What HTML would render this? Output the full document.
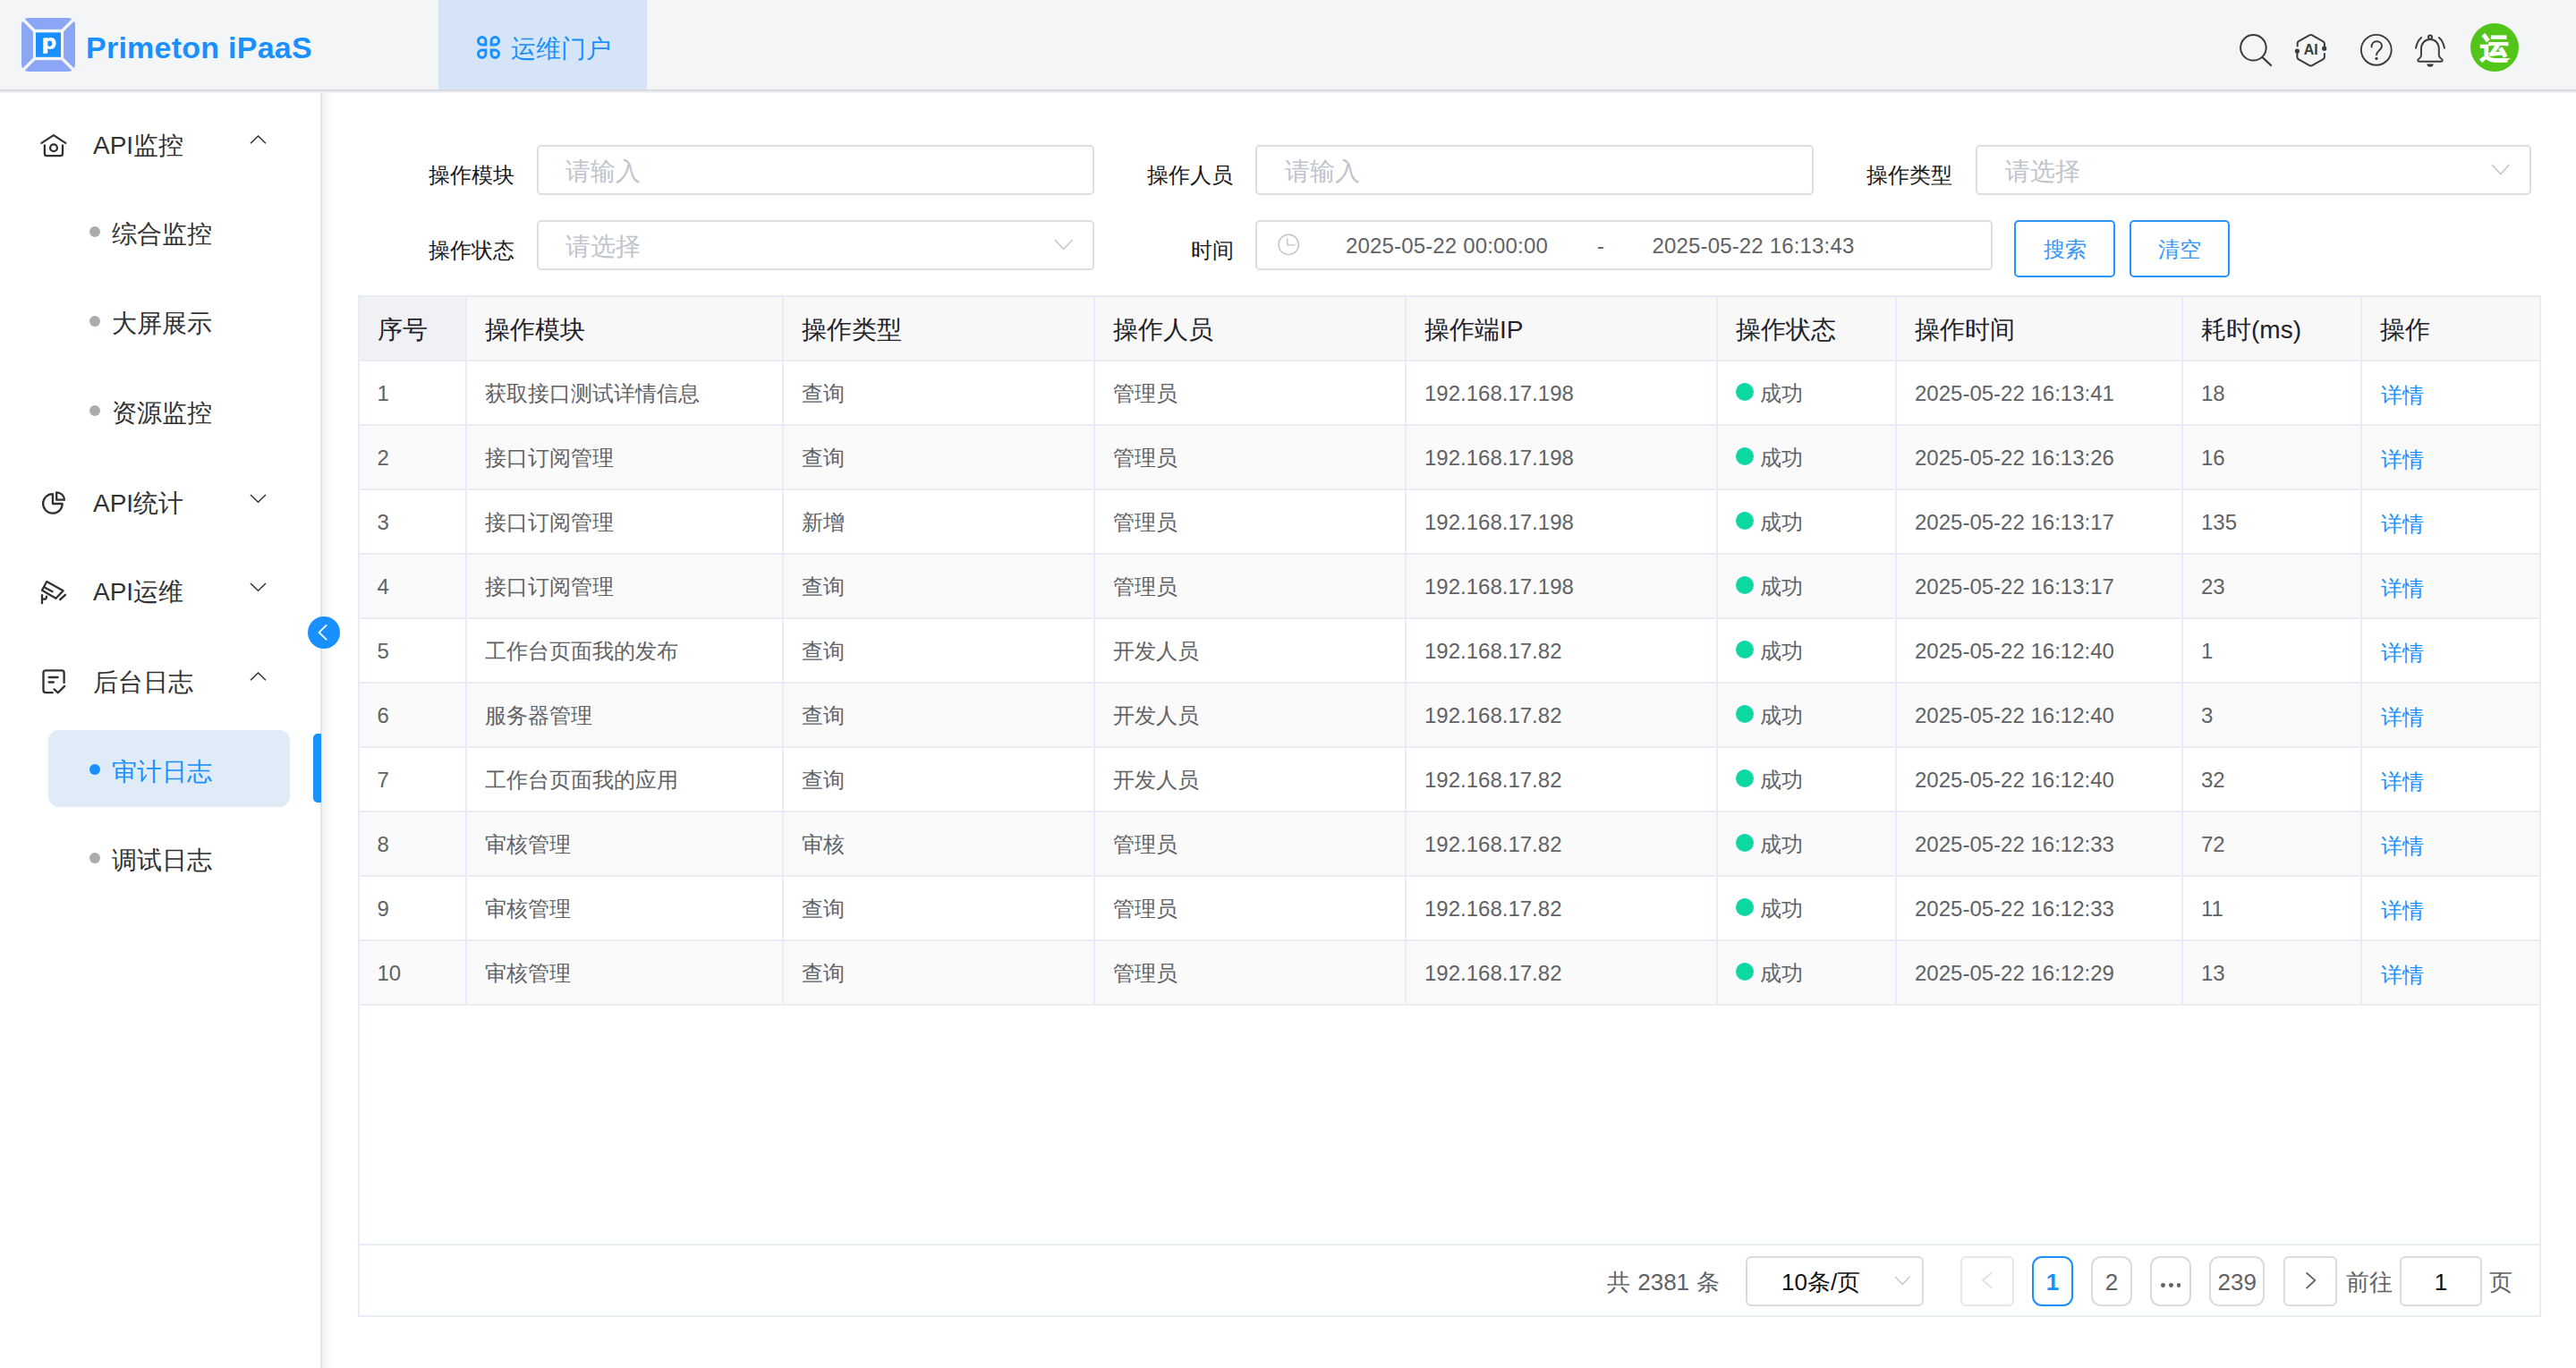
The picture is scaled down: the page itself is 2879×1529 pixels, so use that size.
<!DOCTYPE html>
<html><head><meta charset="utf-8">
<style>
*{margin:0;padding:0;box-sizing:border-box}
html,body{width:2879px;height:1529px;overflow:hidden;background:#fff;font-family:"Liberation Sans",sans-serif;color:#303133}
.abs{position:absolute}
.t{position:absolute;white-space:nowrap}
svg{overflow:visible}
</style></head><body>

<div class="abs" style="left:0px;top:0px;width:2879.0px;height:100.0px;background:#f4f5f7;"></div>
<div class="abs" style="left:0px;top:100px;width:2879.0px;height:2.0px;background:#dadada;"></div>
<div class="abs" style="left:0px;top:102px;width:2879.0px;height:2.0px;background:linear-gradient(#e7ebf3,#f3f5f9);"></div>
<div class="abs" style="left:358px;top:104px;width:2.0px;height:1425.0px;background:#e4e4e4;"></div>
<div class="abs" style="left:360px;top:104px;width:12.0px;height:1425.0px;background:linear-gradient(90deg,#f2f2f2,rgba(255,255,255,0));"></div>
<svg class="abs" style="left:24px;top:20px" width="60" height="60" viewBox="0 0 60 60">
<rect x="0" y="0" width="60" height="60" rx="8" fill="#8aa6f5"/>
<line x1="0" y1="0" x2="60" y2="60" stroke="#f4f5f7" stroke-width="3.3"/>
<line x1="60" y1="0" x2="0" y2="60" stroke="#f4f5f7" stroke-width="3.3"/>
<rect x="12.9" y="12.8" width="34.2" height="34.4" fill="#f4f5f7"/>
<rect x="16" y="16.3" width="28" height="27.5" fill="#1890ff"/>
<path fill-rule="evenodd" d="M24.3,22.5 L29.3,21.9 L29.3,23.2 C30.2,22.2 31.4,21.9 32.6,21.9 C36.3,21.9 38.6,24.6 38.6,28.3 C38.6,32.3 36.1,35 32.4,35 C31.2,35 30.1,34.7 29.3,34 L29.3,39.5 L24.3,40 Z M29.3,26.3 L29.3,31.2 C29.9,31.7 30.7,31.9 31.5,31.9 C33.3,31.9 34.4,30.6 34.4,28.6 C34.4,26.6 33.4,25.4 31.7,25.4 C30.8,25.4 30,25.7 29.3,26.3 Z" fill="#fff"/>
</svg>
<div class="t" style="left:96px;top:30.0px;height:47px;line-height:47px;font-size:34px;color:#1890ff;font-weight:bold;letter-spacing:0.25px;">Primeton iPaaS</div>
<div class="abs" style="left:490px;top:0px;width:233.0px;height:100.0px;background:#d5e5f7;"></div>
<svg class="abs" style="left:533px;top:40px" width="26" height="26" viewBox="0 0 26 26"><g fill="none" stroke="#1890ff" stroke-width="3">
<path d="M9.9,9.9 H5.7 A4.2,4.2 0 1 1 9.9,5.7 Z"/>
<path d="M16.1,9.9 H20.3 A4.2,4.2 0 1 0 16.1,5.7 Z"/>
<path d="M9.9,16.1 H5.7 A4.2,4.2 0 1 0 9.9,20.3 Z"/>
<path d="M16.1,16.1 H20.3 A4.2,4.2 0 1 1 16.1,20.3 Z"/>
</g></svg>
<div class="t" style="left:571px;top:34.5px;height:39px;line-height:39px;font-size:28px;color:#1890ff;font-weight:normal;">运维门户</div>
<svg class="abs" style="left:2495px;top:30px" width="60" height="50" viewBox="0 0 60 50"><g fill="none" stroke="#3b3b3b" stroke-width="2">
<circle cx="23.4" cy="23.3" r="14.3"/>
<line x1="34" y1="34.5" x2="43" y2="43" stroke-width="2.4" stroke-linecap="round"/></g></svg>
<svg class="abs" style="left:2560px;top:30px" width="50" height="50" viewBox="0 0 50 50"><g fill="none" stroke="#3b3b3b" stroke-width="2" stroke-linejoin="round" stroke-linecap="round">
<path d="M7.7,21.4 V18.5 Q7.7,17 9,16.2 L21.5,9.2 Q22.6,8.6 23.7,9.2 L36.4,16.3 Q37.9,17.2 37.9,18.8 V24.2"/>
<path d="M7.4,27 V33.8 Q7.4,35.5 9,36.4 L21.5,43.3 Q22.6,43.9 23.7,43.3 L36.2,36.3 Q37.9,35.4 37.9,33.6 V30"/>
</g>
<circle cx="7.4" cy="27" r="2.6" fill="#3b3b3b"/><circle cx="37.7" cy="24.2" r="2.6" fill="#3b3b3b"/>
<text x="22.7" y="30.7" font-family="Liberation Sans" font-weight="bold" font-size="16" fill="#3b3b3b" text-anchor="middle">AI</text></svg>
<svg class="abs" style="left:2630px;top:30px" width="50" height="50" viewBox="0 0 50 50"><g fill="none" stroke="#3b3b3b" stroke-width="1.9" stroke-linecap="round">
<circle cx="25.8" cy="25.8" r="16.9"/>
<path d="M20.5,22.5 C20.5,18.5 23,16.3 26.2,16.3 C29.6,16.3 32,18.6 32,21.4 C32,23.6 30.6,24.9 28.8,26.6 C26.9,28.4 26,29.5 26,31.2"/>
</g><circle cx="26" cy="35.4" r="1.6" fill="#3b3b3b"/></svg>
<svg class="abs" style="left:2695px;top:30px" width="50" height="55" viewBox="0 0 50 55"><g fill="none" stroke="#3b3b3b" stroke-width="1.9" stroke-linecap="round" stroke-linejoin="round">
<circle cx="21" cy="11.6" r="2.1"/>
<path d="M21,14 C15.2,14 11,18.5 11,24.5 V31.5 Q11,33.8 9,35.3 Q7,36.8 7.2,37.5 Q7.5,38.7 9,38.7 H33 Q34.6,38.7 34.8,37.5 Q35,36.5 33,35.2 Q30.8,33.6 30.8,31.5 V24.5 C30.8,18.5 26.8,14 21,14 Z"/>
<path d="M11.2,12.1 Q6.5,16 5,23.8"/>
<path d="M30.8,12.1 Q35.5,16 37,23.8"/>
</g><path d="M17.4,41.4 H24.6 A3.6,3.3 0 0 1 17.4,41.4 Z" fill="#3b3b3b"/></svg>
<div class="abs" style="left:2761px;top:26px;width:54px;height:54px;border-radius:50%;background:#52c41a"></div>
<div class="t" style="left:2761px;top:31.5px;height:44px;line-height:44px;font-size:32px;color:#fff;font-weight:bold;-webkit-text-stroke:1.3px #fff;"><span style="display:block;width:54px;text-align:center">运</span></div>
<svg class="abs" style="left:40px;top:140px" width="40" height="40" viewBox="0 0 40 40"><g transform="translate(0,0.9)" fill="none" stroke="#303133" stroke-width="2.3" stroke-linecap="round" stroke-linejoin="round"><path d="M6.4,19 L19.9,10.2 L33.3,19" /><path d="M9.9,21.5 V30.5 Q9.9,33.2 12.6,33.2 H27.3 Q30,33.2 30,30.5 V21.5"/><circle cx="20" cy="24.4" r="3.9"/></g></svg>
<div class="t" style="left:104px;top:142.5px;height:39px;line-height:39px;font-size:28px;color:#303133;font-weight:normal;">API监控</div>
<svg class="abs" style="left:279.5px;top:152.4px" width="17" height="8.2" viewBox="0 0 17 8.2"><path d="M0,8.2 L8.5,0 L17,8.2" fill="none" stroke="#303133" stroke-width="1.5"/></svg>
<svg class="abs" style="left:40px;top:540px" width="40" height="40" viewBox="0 0 40 40"><g transform="translate(0,0)" fill="none" stroke="#303133" stroke-width="2.3" stroke-linecap="round" stroke-linejoin="round"><path d="M18.9,12.1 A10.8,10.8 0 1 0 29.7,23 H18.9 Z"/><path d="M23.2,10.3 V18.7 H32 A8.8,8.8 0 0 0 23.2,10.3 Z"/></g></svg>
<div class="t" style="left:104px;top:542.5px;height:39px;line-height:39px;font-size:28px;color:#303133;font-weight:normal;">API统计</div>
<svg class="abs" style="left:279.5px;top:553.4px" width="17" height="8.2" viewBox="0 0 17 8.2"><path d="M0,0 L8.5,8.2 L17,0" fill="none" stroke="#303133" stroke-width="1.5"/></svg>
<svg class="abs" style="left:40px;top:639px" width="40" height="40" viewBox="0 0 40 40"><g transform="translate(0,1.2)" fill="none" stroke="#303133" stroke-width="2.3" stroke-linecap="round" stroke-linejoin="round"><path d="M12.3,9.8 L30.6,20.1 L22.5,28.6 L6.9,19.6 Z"/><path d="M9.8,16.4 L18.6,21"/><path d="M27.2,30 L33,24.6"/><path d="M7,25 V34"/><path d="M7,29.5 H9.5 Q12,29.5 12,26.5"/></g></svg>
<div class="t" style="left:104px;top:641.5px;height:39px;line-height:39px;font-size:28px;color:#303133;font-weight:normal;">API运维</div>
<svg class="abs" style="left:279.5px;top:652.4px" width="17" height="8.2" viewBox="0 0 17 8.2"><path d="M0,0 L8.5,8.2 L17,0" fill="none" stroke="#303133" stroke-width="1.5"/></svg>
<svg class="abs" style="left:40px;top:740px" width="40" height="40" viewBox="0 0 40 40"><g transform="translate(0,0)" fill="none" stroke="#303133" stroke-width="2.3" stroke-linecap="round" stroke-linejoin="round"><path d="M31.6,23 V12 Q31.6,9.4 29,9.4 H11.1 Q8.5,9.4 8.5,12 V31.6 Q8.5,34.2 11.1,34.2 H18.7"/><path d="M14.6,17 H24.6"/><path d="M14.6,22.5 H19.9"/><path d="M20.5,30.4 L24.9,34.3 L32.2,26.9"/></g></svg>
<div class="t" style="left:104px;top:742.5px;height:39px;line-height:39px;font-size:28px;color:#303133;font-weight:normal;">后台日志</div>
<svg class="abs" style="left:279.5px;top:752.4px" width="17" height="8.2" viewBox="0 0 17 8.2"><path d="M0,8.2 L8.5,0 L17,8.2" fill="none" stroke="#303133" stroke-width="1.5"/></svg>
<div class="abs" style="left:54px;top:816px;width:270px;height:86px;border-radius:12px;background:#e0ebf8"></div>
<div class="abs" style="left:350px;top:820px;width:9px;height:77px;border-radius:5px 0 0 5px;background:#1890ff"></div>
<div class="abs" style="left:100px;top:252.5px;width:12px;height:12px;border-radius:50%;background:#acacac"></div>
<div class="t" style="left:125px;top:241.5px;height:39px;line-height:39px;font-size:28px;color:#303133;font-weight:normal;">综合监控</div>
<div class="abs" style="left:100px;top:352.5px;width:12px;height:12px;border-radius:50%;background:#acacac"></div>
<div class="t" style="left:125px;top:341.5px;height:39px;line-height:39px;font-size:28px;color:#303133;font-weight:normal;">大屏展示</div>
<div class="abs" style="left:100px;top:452.5px;width:12px;height:12px;border-radius:50%;background:#acacac"></div>
<div class="t" style="left:125px;top:441.5px;height:39px;line-height:39px;font-size:28px;color:#303133;font-weight:normal;">资源监控</div>
<div class="abs" style="left:100px;top:853.5px;width:12px;height:12px;border-radius:50%;background:#1890ff"></div>
<div class="t" style="left:125px;top:842.5px;height:39px;line-height:39px;font-size:28px;color:#1890ff;font-weight:normal;">审计日志</div>
<div class="abs" style="left:100px;top:952.5px;width:12px;height:12px;border-radius:50%;background:#acacac"></div>
<div class="t" style="left:125px;top:941.5px;height:39px;line-height:39px;font-size:28px;color:#303133;font-weight:normal;">调试日志</div>
<div class="abs" style="left:344px;top:689px;width:36px;height:36px;border-radius:50%;background:#1890ff"></div>
<svg class="abs" style="left:344px;top:689px" width="36" height="36" viewBox="0 0 36 36"><path d="M21.2,9.4 L12.6,17.9 L21.2,26.2" fill="none" stroke="#fff" stroke-width="1.8"/></svg>
<div class="t" style="left:479px;top:178.5px;height:33px;line-height:33px;font-size:24px;color:#1a1a1a;font-weight:normal;">操作模块</div>
<div class="abs" style="left:600px;top:162px;width:623.0px;height:56.0px;border:2px solid #dcdee2;border-radius:5px;background:#fff"></div>
<div class="t" style="left:632px;top:171.5px;height:39px;line-height:39px;font-size:28px;color:#c0c4cc;font-weight:normal;">请输入</div>
<div class="t" style="left:1282px;top:178.5px;height:33px;line-height:33px;font-size:24px;color:#1a1a1a;font-weight:normal;">操作人员</div>
<div class="abs" style="left:1403px;top:162px;width:624.0px;height:56.0px;border:2px solid #dcdee2;border-radius:5px;background:#fff"></div>
<div class="t" style="left:1436px;top:171.5px;height:39px;line-height:39px;font-size:28px;color:#c0c4cc;font-weight:normal;">请输入</div>
<div class="t" style="left:2086px;top:178.5px;height:33px;line-height:33px;font-size:24px;color:#1a1a1a;font-weight:normal;">操作类型</div>
<div class="abs" style="left:2208px;top:162px;width:621.0px;height:56.0px;border:2px solid #dcdee2;border-radius:5px;background:#fff"></div>
<div class="t" style="left:2241px;top:171.5px;height:39px;line-height:39px;font-size:28px;color:#c0c4cc;font-weight:normal;">请选择</div>
<svg class="abs" style="left:2785.2px;top:184.15px" width="19.5" height="10.5" viewBox="0 0 19.5 10.5"><path d="M0,0 L9.75,10.5 L19.5,0" fill="none" stroke="#c0c4cc" stroke-width="1.4"/></svg>
<div class="t" style="left:479px;top:262.5px;height:33px;line-height:33px;font-size:24px;color:#1a1a1a;font-weight:normal;">操作状态</div>
<div class="abs" style="left:600px;top:246px;width:623.0px;height:56.0px;border:2px solid #dcdee2;border-radius:5px;background:#fff"></div>
<div class="t" style="left:632px;top:255.5px;height:39px;line-height:39px;font-size:28px;color:#c0c4cc;font-weight:normal;">请选择</div>
<svg class="abs" style="left:1178.5px;top:268.35px" width="19.5" height="10.5" viewBox="0 0 19.5 10.5"><path d="M0,0 L9.75,10.5 L19.5,0" fill="none" stroke="#c0c4cc" stroke-width="1.4"/></svg>
<div class="t" style="left:1331px;top:262.5px;height:33px;line-height:33px;font-size:24px;color:#1a1a1a;font-weight:normal;">时间</div>
<div class="abs" style="left:1403px;top:246px;width:824.0px;height:56.0px;border:2px solid #dcdee2;border-radius:5px;background:#fff"></div>
<svg class="abs" style="left:1426px;top:261px" width="30" height="30" viewBox="0 0 30 30"><g fill="none" stroke="#c0c4cc" stroke-width="1.4"><circle cx="14.2" cy="12.4" r="11.2"/><path d="M12.8,5.7 V12.9 H21.2"/></g></svg>
<div class="t" style="left:1504px;top:257.5px;height:33px;line-height:33px;font-size:24px;color:#606266;font-weight:normal;letter-spacing:0.16px;">2025-05-22 00:00:00</div>
<div class="t" style="left:1785px;top:257.5px;height:33px;line-height:33px;font-size:24px;color:#606266;font-weight:normal;">-</div>
<div class="t" style="left:1846.5px;top:257.5px;height:33px;line-height:33px;font-size:24px;color:#606266;font-weight:normal;letter-spacing:0.16px;">2025-05-22 16:13:43</div>
<div class="abs" style="left:2251px;top:246px;width:113.0px;height:64.0px;border:2px solid #2b93fc;border-radius:5px;background:#fff"></div>
<div class="t" style="left:2251px;top:261.5px;height:33px;line-height:33px;font-size:24px;color:#3396fa;font-weight:normal;"><span style="display:block;width:113px;text-align:center">搜索</span></div>
<div class="abs" style="left:2380px;top:246px;width:112.0px;height:64.0px;border:2px solid #2b93fc;border-radius:5px;background:#fff"></div>
<div class="t" style="left:2380px;top:261.5px;height:33px;line-height:33px;font-size:24px;color:#3396fa;font-weight:normal;"><span style="display:block;width:112px;text-align:center">清空</span></div>
<div class="abs" style="left:400px;top:330px;width:2440px;height:1142px;border:2px solid #e8ecf3"></div>
<div class="abs" style="left:402px;top:332px;width:2436.0px;height:71.0px;background:#f8f8f9;"></div>
<div class="abs" style="left:402px;top:332px;width:120.0px;height:71.0px;background:#f0f1f4;"></div>
<div class="abs" style="left:402px;top:475px;width:2436.0px;height:72.0px;background:#fafafa;"></div>
<div class="abs" style="left:402px;top:619px;width:2436.0px;height:72.0px;background:#fafafa;"></div>
<div class="abs" style="left:402px;top:763px;width:2436.0px;height:72.0px;background:#fafafa;"></div>
<div class="abs" style="left:402px;top:907px;width:2436.0px;height:72.0px;background:#fafafa;"></div>
<div class="abs" style="left:402px;top:1051px;width:2436.0px;height:72.0px;background:#fafafa;"></div>
<div class="abs" style="left:400px;top:402px;width:2439.0px;height:2.0px;background:#e8ecf3;"></div>
<div class="abs" style="left:400px;top:474px;width:2439.0px;height:2.0px;background:#e8ecf3;"></div>
<div class="abs" style="left:400px;top:546px;width:2439.0px;height:2.0px;background:#e8ecf3;"></div>
<div class="abs" style="left:400px;top:618px;width:2439.0px;height:2.0px;background:#e8ecf3;"></div>
<div class="abs" style="left:400px;top:690px;width:2439.0px;height:2.0px;background:#e8ecf3;"></div>
<div class="abs" style="left:400px;top:762px;width:2439.0px;height:2.0px;background:#e8ecf3;"></div>
<div class="abs" style="left:400px;top:834px;width:2439.0px;height:2.0px;background:#e8ecf3;"></div>
<div class="abs" style="left:400px;top:906px;width:2439.0px;height:2.0px;background:#e8ecf3;"></div>
<div class="abs" style="left:400px;top:978px;width:2439.0px;height:2.0px;background:#e8ecf3;"></div>
<div class="abs" style="left:400px;top:1050px;width:2439.0px;height:2.0px;background:#e8ecf3;"></div>
<div class="abs" style="left:400px;top:1122px;width:2439.0px;height:2.0px;background:#e8ecf3;"></div>
<div class="abs" style="left:520px;top:330px;width:2.0px;height:793.0px;background:#e8ecf3;"></div>
<div class="abs" style="left:874px;top:330px;width:2.0px;height:793.0px;background:#e8ecf3;"></div>
<div class="abs" style="left:1222px;top:330px;width:2.0px;height:793.0px;background:#e8ecf3;"></div>
<div class="abs" style="left:1570px;top:330px;width:2.0px;height:793.0px;background:#e8ecf3;"></div>
<div class="abs" style="left:1918px;top:330px;width:2.0px;height:793.0px;background:#e8ecf3;"></div>
<div class="abs" style="left:2118px;top:330px;width:2.0px;height:793.0px;background:#e8ecf3;"></div>
<div class="abs" style="left:2438px;top:330px;width:2.0px;height:793.0px;background:#e8ecf3;"></div>
<div class="abs" style="left:2638px;top:330px;width:2.0px;height:793.0px;background:#e8ecf3;"></div>
<div class="abs" style="left:400px;top:1390px;width:2439.0px;height:2.0px;background:#e8ecf3;"></div>
<div class="t" style="left:421.5px;top:349.0px;height:39px;line-height:39px;font-size:28px;color:#1f2329;font-weight:normal;">序号</div>
<div class="t" style="left:542px;top:349.0px;height:39px;line-height:39px;font-size:28px;color:#1f2329;font-weight:normal;">操作模块</div>
<div class="t" style="left:896px;top:349.0px;height:39px;line-height:39px;font-size:28px;color:#1f2329;font-weight:normal;">操作类型</div>
<div class="t" style="left:1244px;top:349.0px;height:39px;line-height:39px;font-size:28px;color:#1f2329;font-weight:normal;">操作人员</div>
<div class="t" style="left:1592px;top:349.0px;height:39px;line-height:39px;font-size:28px;color:#1f2329;font-weight:normal;">操作端IP</div>
<div class="t" style="left:1940px;top:349.0px;height:39px;line-height:39px;font-size:28px;color:#1f2329;font-weight:normal;">操作状态</div>
<div class="t" style="left:2140px;top:349.0px;height:39px;line-height:39px;font-size:28px;color:#1f2329;font-weight:normal;">操作时间</div>
<div class="t" style="left:2460px;top:349.0px;height:39px;line-height:39px;font-size:28px;color:#1f2329;font-weight:normal;">耗时(ms)</div>
<div class="t" style="left:2660px;top:349.0px;height:39px;line-height:39px;font-size:28px;color:#1f2329;font-weight:normal;">操作</div>
<div class="t" style="left:421.5px;top:422.5px;height:33px;line-height:33px;font-size:24px;color:#606266;font-weight:normal;">1</div>
<div class="t" style="left:542px;top:422.5px;height:33px;line-height:33px;font-size:24px;color:#606266;font-weight:normal;">获取接口测试详情信息</div>
<div class="t" style="left:896px;top:422.5px;height:33px;line-height:33px;font-size:24px;color:#606266;font-weight:normal;">查询</div>
<div class="t" style="left:1244px;top:422.5px;height:33px;line-height:33px;font-size:24px;color:#606266;font-weight:normal;">管理员</div>
<div class="t" style="left:1592px;top:422.5px;height:33px;line-height:33px;font-size:24px;color:#606266;font-weight:normal;">192.168.17.198</div>
<div class="t" style="left:2140px;top:422.5px;height:33px;line-height:33px;font-size:24px;color:#606266;font-weight:normal;">2025-05-22 16:13:41</div>
<div class="t" style="left:2460px;top:422.5px;height:33px;line-height:33px;font-size:24px;color:#606266;font-weight:normal;">18</div>
<div class="abs" style="left:1940px;top:428.0px;width:20px;height:20px;border-radius:50%;background:#0dd7a3"></div>
<div class="t" style="left:1966.5px;top:422.5px;height:33px;line-height:33px;font-size:24px;color:#606266;font-weight:normal;">成功</div>
<div class="t" style="left:2661px;top:424.5px;height:33px;line-height:33px;font-size:24px;color:#1890ff;font-weight:normal;">详情</div>
<div class="t" style="left:421.5px;top:494.5px;height:33px;line-height:33px;font-size:24px;color:#606266;font-weight:normal;">2</div>
<div class="t" style="left:542px;top:494.5px;height:33px;line-height:33px;font-size:24px;color:#606266;font-weight:normal;">接口订阅管理</div>
<div class="t" style="left:896px;top:494.5px;height:33px;line-height:33px;font-size:24px;color:#606266;font-weight:normal;">查询</div>
<div class="t" style="left:1244px;top:494.5px;height:33px;line-height:33px;font-size:24px;color:#606266;font-weight:normal;">管理员</div>
<div class="t" style="left:1592px;top:494.5px;height:33px;line-height:33px;font-size:24px;color:#606266;font-weight:normal;">192.168.17.198</div>
<div class="t" style="left:2140px;top:494.5px;height:33px;line-height:33px;font-size:24px;color:#606266;font-weight:normal;">2025-05-22 16:13:26</div>
<div class="t" style="left:2460px;top:494.5px;height:33px;line-height:33px;font-size:24px;color:#606266;font-weight:normal;">16</div>
<div class="abs" style="left:1940px;top:500.0px;width:20px;height:20px;border-radius:50%;background:#0dd7a3"></div>
<div class="t" style="left:1966.5px;top:494.5px;height:33px;line-height:33px;font-size:24px;color:#606266;font-weight:normal;">成功</div>
<div class="t" style="left:2661px;top:496.5px;height:33px;line-height:33px;font-size:24px;color:#1890ff;font-weight:normal;">详情</div>
<div class="t" style="left:421.5px;top:566.5px;height:33px;line-height:33px;font-size:24px;color:#606266;font-weight:normal;">3</div>
<div class="t" style="left:542px;top:566.5px;height:33px;line-height:33px;font-size:24px;color:#606266;font-weight:normal;">接口订阅管理</div>
<div class="t" style="left:896px;top:566.5px;height:33px;line-height:33px;font-size:24px;color:#606266;font-weight:normal;">新增</div>
<div class="t" style="left:1244px;top:566.5px;height:33px;line-height:33px;font-size:24px;color:#606266;font-weight:normal;">管理员</div>
<div class="t" style="left:1592px;top:566.5px;height:33px;line-height:33px;font-size:24px;color:#606266;font-weight:normal;">192.168.17.198</div>
<div class="t" style="left:2140px;top:566.5px;height:33px;line-height:33px;font-size:24px;color:#606266;font-weight:normal;">2025-05-22 16:13:17</div>
<div class="t" style="left:2460px;top:566.5px;height:33px;line-height:33px;font-size:24px;color:#606266;font-weight:normal;">135</div>
<div class="abs" style="left:1940px;top:572.0px;width:20px;height:20px;border-radius:50%;background:#0dd7a3"></div>
<div class="t" style="left:1966.5px;top:566.5px;height:33px;line-height:33px;font-size:24px;color:#606266;font-weight:normal;">成功</div>
<div class="t" style="left:2661px;top:568.5px;height:33px;line-height:33px;font-size:24px;color:#1890ff;font-weight:normal;">详情</div>
<div class="t" style="left:421.5px;top:638.5px;height:33px;line-height:33px;font-size:24px;color:#606266;font-weight:normal;">4</div>
<div class="t" style="left:542px;top:638.5px;height:33px;line-height:33px;font-size:24px;color:#606266;font-weight:normal;">接口订阅管理</div>
<div class="t" style="left:896px;top:638.5px;height:33px;line-height:33px;font-size:24px;color:#606266;font-weight:normal;">查询</div>
<div class="t" style="left:1244px;top:638.5px;height:33px;line-height:33px;font-size:24px;color:#606266;font-weight:normal;">管理员</div>
<div class="t" style="left:1592px;top:638.5px;height:33px;line-height:33px;font-size:24px;color:#606266;font-weight:normal;">192.168.17.198</div>
<div class="t" style="left:2140px;top:638.5px;height:33px;line-height:33px;font-size:24px;color:#606266;font-weight:normal;">2025-05-22 16:13:17</div>
<div class="t" style="left:2460px;top:638.5px;height:33px;line-height:33px;font-size:24px;color:#606266;font-weight:normal;">23</div>
<div class="abs" style="left:1940px;top:644.0px;width:20px;height:20px;border-radius:50%;background:#0dd7a3"></div>
<div class="t" style="left:1966.5px;top:638.5px;height:33px;line-height:33px;font-size:24px;color:#606266;font-weight:normal;">成功</div>
<div class="t" style="left:2661px;top:640.5px;height:33px;line-height:33px;font-size:24px;color:#1890ff;font-weight:normal;">详情</div>
<div class="t" style="left:421.5px;top:710.5px;height:33px;line-height:33px;font-size:24px;color:#606266;font-weight:normal;">5</div>
<div class="t" style="left:542px;top:710.5px;height:33px;line-height:33px;font-size:24px;color:#606266;font-weight:normal;">工作台页面我的发布</div>
<div class="t" style="left:896px;top:710.5px;height:33px;line-height:33px;font-size:24px;color:#606266;font-weight:normal;">查询</div>
<div class="t" style="left:1244px;top:710.5px;height:33px;line-height:33px;font-size:24px;color:#606266;font-weight:normal;">开发人员</div>
<div class="t" style="left:1592px;top:710.5px;height:33px;line-height:33px;font-size:24px;color:#606266;font-weight:normal;">192.168.17.82</div>
<div class="t" style="left:2140px;top:710.5px;height:33px;line-height:33px;font-size:24px;color:#606266;font-weight:normal;">2025-05-22 16:12:40</div>
<div class="t" style="left:2460px;top:710.5px;height:33px;line-height:33px;font-size:24px;color:#606266;font-weight:normal;">1</div>
<div class="abs" style="left:1940px;top:716.0px;width:20px;height:20px;border-radius:50%;background:#0dd7a3"></div>
<div class="t" style="left:1966.5px;top:710.5px;height:33px;line-height:33px;font-size:24px;color:#606266;font-weight:normal;">成功</div>
<div class="t" style="left:2661px;top:712.5px;height:33px;line-height:33px;font-size:24px;color:#1890ff;font-weight:normal;">详情</div>
<div class="t" style="left:421.5px;top:782.5px;height:33px;line-height:33px;font-size:24px;color:#606266;font-weight:normal;">6</div>
<div class="t" style="left:542px;top:782.5px;height:33px;line-height:33px;font-size:24px;color:#606266;font-weight:normal;">服务器管理</div>
<div class="t" style="left:896px;top:782.5px;height:33px;line-height:33px;font-size:24px;color:#606266;font-weight:normal;">查询</div>
<div class="t" style="left:1244px;top:782.5px;height:33px;line-height:33px;font-size:24px;color:#606266;font-weight:normal;">开发人员</div>
<div class="t" style="left:1592px;top:782.5px;height:33px;line-height:33px;font-size:24px;color:#606266;font-weight:normal;">192.168.17.82</div>
<div class="t" style="left:2140px;top:782.5px;height:33px;line-height:33px;font-size:24px;color:#606266;font-weight:normal;">2025-05-22 16:12:40</div>
<div class="t" style="left:2460px;top:782.5px;height:33px;line-height:33px;font-size:24px;color:#606266;font-weight:normal;">3</div>
<div class="abs" style="left:1940px;top:788.0px;width:20px;height:20px;border-radius:50%;background:#0dd7a3"></div>
<div class="t" style="left:1966.5px;top:782.5px;height:33px;line-height:33px;font-size:24px;color:#606266;font-weight:normal;">成功</div>
<div class="t" style="left:2661px;top:784.5px;height:33px;line-height:33px;font-size:24px;color:#1890ff;font-weight:normal;">详情</div>
<div class="t" style="left:421.5px;top:854.5px;height:33px;line-height:33px;font-size:24px;color:#606266;font-weight:normal;">7</div>
<div class="t" style="left:542px;top:854.5px;height:33px;line-height:33px;font-size:24px;color:#606266;font-weight:normal;">工作台页面我的应用</div>
<div class="t" style="left:896px;top:854.5px;height:33px;line-height:33px;font-size:24px;color:#606266;font-weight:normal;">查询</div>
<div class="t" style="left:1244px;top:854.5px;height:33px;line-height:33px;font-size:24px;color:#606266;font-weight:normal;">开发人员</div>
<div class="t" style="left:1592px;top:854.5px;height:33px;line-height:33px;font-size:24px;color:#606266;font-weight:normal;">192.168.17.82</div>
<div class="t" style="left:2140px;top:854.5px;height:33px;line-height:33px;font-size:24px;color:#606266;font-weight:normal;">2025-05-22 16:12:40</div>
<div class="t" style="left:2460px;top:854.5px;height:33px;line-height:33px;font-size:24px;color:#606266;font-weight:normal;">32</div>
<div class="abs" style="left:1940px;top:860.0px;width:20px;height:20px;border-radius:50%;background:#0dd7a3"></div>
<div class="t" style="left:1966.5px;top:854.5px;height:33px;line-height:33px;font-size:24px;color:#606266;font-weight:normal;">成功</div>
<div class="t" style="left:2661px;top:856.5px;height:33px;line-height:33px;font-size:24px;color:#1890ff;font-weight:normal;">详情</div>
<div class="t" style="left:421.5px;top:926.5px;height:33px;line-height:33px;font-size:24px;color:#606266;font-weight:normal;">8</div>
<div class="t" style="left:542px;top:926.5px;height:33px;line-height:33px;font-size:24px;color:#606266;font-weight:normal;">审核管理</div>
<div class="t" style="left:896px;top:926.5px;height:33px;line-height:33px;font-size:24px;color:#606266;font-weight:normal;">审核</div>
<div class="t" style="left:1244px;top:926.5px;height:33px;line-height:33px;font-size:24px;color:#606266;font-weight:normal;">管理员</div>
<div class="t" style="left:1592px;top:926.5px;height:33px;line-height:33px;font-size:24px;color:#606266;font-weight:normal;">192.168.17.82</div>
<div class="t" style="left:2140px;top:926.5px;height:33px;line-height:33px;font-size:24px;color:#606266;font-weight:normal;">2025-05-22 16:12:33</div>
<div class="t" style="left:2460px;top:926.5px;height:33px;line-height:33px;font-size:24px;color:#606266;font-weight:normal;">72</div>
<div class="abs" style="left:1940px;top:932.0px;width:20px;height:20px;border-radius:50%;background:#0dd7a3"></div>
<div class="t" style="left:1966.5px;top:926.5px;height:33px;line-height:33px;font-size:24px;color:#606266;font-weight:normal;">成功</div>
<div class="t" style="left:2661px;top:928.5px;height:33px;line-height:33px;font-size:24px;color:#1890ff;font-weight:normal;">详情</div>
<div class="t" style="left:421.5px;top:998.5px;height:33px;line-height:33px;font-size:24px;color:#606266;font-weight:normal;">9</div>
<div class="t" style="left:542px;top:998.5px;height:33px;line-height:33px;font-size:24px;color:#606266;font-weight:normal;">审核管理</div>
<div class="t" style="left:896px;top:998.5px;height:33px;line-height:33px;font-size:24px;color:#606266;font-weight:normal;">查询</div>
<div class="t" style="left:1244px;top:998.5px;height:33px;line-height:33px;font-size:24px;color:#606266;font-weight:normal;">管理员</div>
<div class="t" style="left:1592px;top:998.5px;height:33px;line-height:33px;font-size:24px;color:#606266;font-weight:normal;">192.168.17.82</div>
<div class="t" style="left:2140px;top:998.5px;height:33px;line-height:33px;font-size:24px;color:#606266;font-weight:normal;">2025-05-22 16:12:33</div>
<div class="t" style="left:2460px;top:998.5px;height:33px;line-height:33px;font-size:24px;color:#606266;font-weight:normal;">11</div>
<div class="abs" style="left:1940px;top:1004.0px;width:20px;height:20px;border-radius:50%;background:#0dd7a3"></div>
<div class="t" style="left:1966.5px;top:998.5px;height:33px;line-height:33px;font-size:24px;color:#606266;font-weight:normal;">成功</div>
<div class="t" style="left:2661px;top:1000.5px;height:33px;line-height:33px;font-size:24px;color:#1890ff;font-weight:normal;">详情</div>
<div class="t" style="left:421.5px;top:1070.5px;height:33px;line-height:33px;font-size:24px;color:#606266;font-weight:normal;">10</div>
<div class="t" style="left:542px;top:1070.5px;height:33px;line-height:33px;font-size:24px;color:#606266;font-weight:normal;">审核管理</div>
<div class="t" style="left:896px;top:1070.5px;height:33px;line-height:33px;font-size:24px;color:#606266;font-weight:normal;">查询</div>
<div class="t" style="left:1244px;top:1070.5px;height:33px;line-height:33px;font-size:24px;color:#606266;font-weight:normal;">管理员</div>
<div class="t" style="left:1592px;top:1070.5px;height:33px;line-height:33px;font-size:24px;color:#606266;font-weight:normal;">192.168.17.82</div>
<div class="t" style="left:2140px;top:1070.5px;height:33px;line-height:33px;font-size:24px;color:#606266;font-weight:normal;">2025-05-22 16:12:29</div>
<div class="t" style="left:2460px;top:1070.5px;height:33px;line-height:33px;font-size:24px;color:#606266;font-weight:normal;">13</div>
<div class="abs" style="left:1940px;top:1076.0px;width:20px;height:20px;border-radius:50%;background:#0dd7a3"></div>
<div class="t" style="left:1966.5px;top:1070.5px;height:33px;line-height:33px;font-size:24px;color:#606266;font-weight:normal;">成功</div>
<div class="t" style="left:2661px;top:1072.5px;height:33px;line-height:33px;font-size:24px;color:#1890ff;font-weight:normal;">详情</div>
<div class="t" style="left:1796px;top:1415.0px;height:36px;line-height:36px;font-size:26px;color:#606266;font-weight:normal;word-spacing:1px;">共 2381 条</div>
<div class="abs" style="left:1951px;top:1404px;width:199.0px;height:56.0px;border:2px solid #d9dcdf;border-radius:6px;background:#fff"></div>
<div class="t" style="left:1991px;top:1415.0px;height:36px;line-height:36px;font-size:26px;color:#111;font-weight:normal;">10条/页</div>
<svg class="abs" style="left:2118px;top:1427.25px" width="16.5" height="8.5" viewBox="0 0 16.5 8.5"><path d="M0,0 L8.25,8.5 L16.5,0" fill="none" stroke="#c0c4cc" stroke-width="1.3"/></svg>
<div class="abs" style="left:2191px;top:1404px;width:60.0px;height:56.0px;border:2px solid #e4e7ed;border-radius:6px;background:#fff"></div>
<svg class="abs" style="left:2191.5px;top:1404px" width="59" height="55" viewBox="0 0 59 55"><path d="M34.2,18.4 L23.9,26.8 L34.2,35.7" fill="none" stroke="#dde1e8" stroke-width="1.8"/></svg>
<div class="abs" style="left:2271px;top:1404px;width:46.0px;height:56.0px;border:2px solid #1890ff;border-radius:11px;background:#fff"></div>
<div class="t" style="left:2271.5px;top:1415.0px;height:36px;line-height:36px;font-size:26px;color:#1890ff;font-weight:bold;"><span style="display:block;width:45px;text-align:center">1</span></div>
<div class="abs" style="left:2337px;top:1404px;width:46.0px;height:56.0px;border:2px solid #d9dcdf;border-radius:11px;background:#fff"></div>
<div class="t" style="left:2337.5px;top:1415.0px;height:36px;line-height:36px;font-size:26px;color:#606266;font-weight:normal;"><span style="display:block;width:45px;text-align:center">2</span></div>
<div class="abs" style="left:2403px;top:1404px;width:46.0px;height:56.0px;border:2px solid #d9dcdf;border-radius:11px;background:#fff"></div>
<div class="abs" style="left:2415.2px;top:1434.1px;width:4.8px;height:4.8px;border-radius:50%;background:#606266"></div>
<div class="abs" style="left:2424.3px;top:1434.1px;width:4.8px;height:4.8px;border-radius:50%;background:#606266"></div>
<div class="abs" style="left:2432.6px;top:1434.1px;width:4.8px;height:4.8px;border-radius:50%;background:#606266"></div>
<div class="abs" style="left:2469px;top:1404px;width:62.0px;height:56.0px;border:2px solid #d9dcdf;border-radius:11px;background:#fff"></div>
<div class="t" style="left:2469.5px;top:1415.0px;height:36px;line-height:36px;font-size:26px;color:#606266;font-weight:normal;"><span style="display:block;width:61.5px;text-align:center">239</span></div>
<div class="abs" style="left:2552px;top:1404px;width:60.0px;height:56.0px;border:2px solid #d9dcdf;border-radius:6px;background:#fff"></div>
<svg class="abs" style="left:2552.5px;top:1404px" width="59" height="55" viewBox="0 0 59 55"><path d="M24.6,18.5 L34.4,27 L24.6,36" fill="none" stroke="#606266" stroke-width="1.7"/></svg>
<div class="t" style="left:2622px;top:1415.0px;height:36px;line-height:36px;font-size:26px;color:#606266;font-weight:normal;">前往</div>
<div class="abs" style="left:2682px;top:1404px;width:92.0px;height:56.0px;border:2px solid #d9dcdf;border-radius:6px;background:#fff"></div>
<div class="t" style="left:2682.5px;top:1415.0px;height:36px;line-height:36px;font-size:26px;color:#111;font-weight:normal;"><span style="display:block;width:91px;text-align:center">1</span></div>
<div class="t" style="left:2782px;top:1415.0px;height:36px;line-height:36px;font-size:26px;color:#606266;font-weight:normal;">页</div>
</body></html>
